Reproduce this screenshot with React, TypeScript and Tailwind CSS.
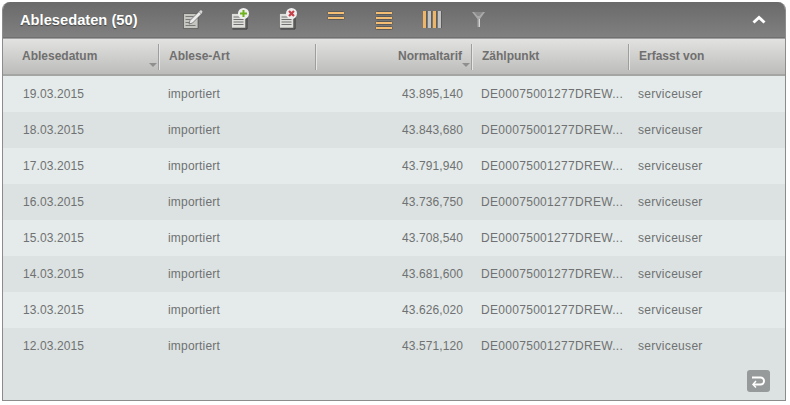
const rows: [string, string][] = [
  ["19.03.2015", "43.895,140"],
  ["18.03.2015", "43.843,680"],
  ["17.03.2015", "43.791,940"],
  ["16.03.2015", "43.736,750"],
  ["15.03.2015", "43.708,540"],
  ["14.03.2015", "43.681,600"],
  ["13.03.2015", "43.626,020"],
  ["12.03.2015", "43.571,120"],
];

function Doc() {
  return (
    <>
      <path d="M0.500 4.500h11l3 3v11.500H0.500z" fill="#dededa" stroke="#4a4a4a" strokeWidth="0.500" />
      <path d="M2.500 8h8M2.500 10.500h10M2.500 13h10M2.500 15.500h10" stroke="#707070" strokeWidth="1" />
      <path d="M1.500 20h14.500V8" fill="none" stroke="#3a3a3a" strokeWidth="1" />
    </>
  );
}

function EditIcon() {
  return (
    <svg width="20" height="19" viewBox="0 0 20 19">
      <path d="M0.500 3.500h14.500v15H0.500z" fill="#c6c6c0" stroke="#444" strokeWidth="0.600" />
      <path d="M2.500 6.500h8M2.500 9.500h5M2.500 12.500h4M2.500 15.500h10" stroke="#7a7a7a" strokeWidth="1" />
      <path d="M6 14l1-3.500L16 1.500l2.500 2.500-9 9z" fill="#ececec" stroke="#444" strokeWidth="0.600" />
      <path d="M16 1.500l2-1.500 1.500 1.500-1 2.500z" fill="#d8d8d8" />
    </svg>
  );
}

function AddIcon() {
  return (
    <svg width="19" height="22" viewBox="0 0 19 22">
      <g transform="translate(0,1)"><Doc /></g>
      <circle cx="12.500" cy="5.500" r="5.500" fill="#eeeeee" />
      <path d="M12.500 2v7M9 5.500h7" stroke="#6eb31c" strokeWidth="2" />
    </svg>
  );
}

function DeleteIcon() {
  return (
    <svg width="19" height="22" viewBox="0 0 19 22">
      <g transform="translate(0,1)"><Doc /></g>
      <circle cx="12.500" cy="5.500" r="5.500" fill="#eeeeee" />
      <path d="M10 3l5 5M15 3l-5 5" stroke="#c5404a" strokeWidth="2.200" />
    </svg>
  );
}

function Bar({ y }: { y: number }) {
  return <rect x="0.500" y={y} width="17" height="3" rx="1" fill="#f3bd74" stroke="#5a5a5a" strokeWidth="1" />;
}

function LessIcon() {
  return (
    <svg width="18" height="10" viewBox="0 0 18 10">
      <Bar y={0.5} />
      <Bar y={5.5} />
    </svg>
  );
}

function MoreIcon() {
  return (
    <svg width="18" height="20" viewBox="0 0 18 20">
      <Bar y={0.5} />
      <Bar y={5.5} />
      <Bar y={10.5} />
      <Bar y={15.5} />
    </svg>
  );
}

function ColumnsIcon() {
  return (
    <svg width="19" height="17" viewBox="0 0 19 17">
      <rect x="0" y="0" width="3" height="17" fill="#efb566" />
      <rect x="5" y="0" width="3" height="17" fill="#c2c2c2" />
      <rect x="10" y="0" width="3" height="17" fill="#efb566" />
      <rect x="15" y="0" width="3" height="17" fill="#c2c2c2" />
      <path d="M3.500 0v17M8.500 0v17M13.500 0v17M18.500 0v17" stroke="#5c5c5c" strokeWidth="1" />
    </svg>
  );
}

function FilterIcon() {
  return (
    <svg width="13" height="15" viewBox="0 0 13 15">
      <path d="M0 0h13L8 7v8H5.500V7z" fill="#a9a9a9" />
      <path d="M2 0h9L7.500 4h-2z" fill="#8a8a8a" />
      <path d="M7 7h1v8H7z" fill="#d4d4d4" />
    </svg>
  );
}

function Sep() {
  return <div className="w-px h-[26px] bg-[#9e9f9d] shadow-[1px_0_0_#e6e6e6]" />;
}

function SortArrow() {
  return (
    <div className="absolute right-[2px] bottom-[7px] w-0 h-0 border-l-[4px] border-r-[4px] border-t-[4px] border-l-transparent border-r-transparent border-t-[#8f8f8f]" />
  );
}

export default function App() {
  return (
    <div className="w-[790px] h-[405px] bg-white pt-[2px] pl-[2px] font-['Liberation_Sans',Arial,sans-serif]">
      <div className="w-[784px] h-[399px] flex flex-col rounded-t-[8px] border border-t-0 border-[#8c8c8c] bg-[#dce2e1] overflow-hidden">
        <div className="h-[36px] shrink-0 flex items-start bg-gradient-to-b from-[#6a6a6a] to-[#808080] border-b border-[#707070] pl-[17px] pr-[19px]">
          <div className="w-[163px] mt-[10px] text-[14.7px] leading-[17px] font-bold text-white [text-shadow:0_1px_1px_#444]">Ablesedaten (50)</div>
          <div className="w-[48px] mt-[8px]"><EditIcon /></div>
          <div className="w-[48px] mt-[6px]"><AddIcon /></div>
          <div className="w-[48px] mt-[6px]"><DeleteIcon /></div>
          <div className="w-[48px] mt-[9px]"><LessIcon /></div>
          <div className="w-[48px] mt-[9px]"><MoreIcon /></div>
          <div className="w-[49px] mt-[9px]"><ColumnsIcon /></div>
          <div className="w-[13px] mt-[10px]"><FilterIcon /></div>
          <svg className="ml-auto mt-[13px]" width="14" height="9" viewBox="0 0 14 9">
            <path d="M1.500 7.500L7 2.500l5.500 5" fill="none" stroke="#ffffff" strokeWidth="3" />
          </svg>
        </div>

        <div className="h-[38px] shrink-0 flex bg-gradient-to-b from-[#e2e2e0] to-[#bcbcba] border-t border-[#9f9f9f] border-b-2 border-b-[#a3a6a3] text-[12px] font-bold text-[#706f6f]">
          <div className="relative w-[156px] flex items-center justify-between pl-[19px]">
            <span className="-mt-[2px]">Ablesedatum</span>
            <SortArrow />
            <Sep />
          </div>
          <div className="w-[157px] flex items-center justify-between pl-[10px]">
            <span className="-mt-[2px]">Ablese-Art</span>
            <Sep />
          </div>
          <div className="relative w-[156px] flex items-center justify-end">
            <span className="-mt-[2px] mr-[9px]">Normaltarif</span>
            <SortArrow />
            <Sep />
          </div>
          <div className="w-[157px] flex items-center justify-between pl-[10px]">
            <span className="-mt-[2px]">Zählpunkt</span>
            <Sep />
          </div>
          <div className="flex-1 flex items-center pl-[10px]">
            <span className="-mt-[2px]">Erfasst von</span>
          </div>
        </div>

        <div className="flex flex-col text-[12px] text-[#6f7172]">
          {rows.map(([date, value], i) => (
            <div key={date} className={`h-[36px] flex items-center ${i % 2 === 0 ? "bg-[#e5ebea]" : "bg-[#dce2e1]"}`}>
              <div className="w-[156px] pl-[20px] tracking-[0.1px]">{date}</div>
              <div className="w-[157px] pl-[9px] tracking-[0.2px]">importiert</div>
              <div className="w-[156px] pr-[9px] text-right tracking-[0.1px]">{value}</div>
              <div className="w-[157px] pl-[9px] tracking-[0.3px]">DE00075001277DREW...</div>
              <div className="flex-1 pl-[9px] tracking-[0.3px]">serviceuser</div>
            </div>
          ))}
        </div>

        <div className="flex-1 flex justify-end items-start pt-[6px] pr-[15px]">
          <div className="w-[23px] h-[22px] rounded-[3px] bg-[#979a9a] flex items-center justify-center">
            <svg width="15" height="13" viewBox="0 0 15 13">
              <path d="M1 2.500h8.500a3.500 3.500 0 0 1 0 7H3" fill="none" stroke="#ffffff" strokeWidth="2" />
              <path d="M5 6L2 9.500 5 12.500" fill="none" stroke="#ffffff" strokeWidth="1.500" />
            </svg>
          </div>
        </div>
      </div>
    </div>
  );
}
